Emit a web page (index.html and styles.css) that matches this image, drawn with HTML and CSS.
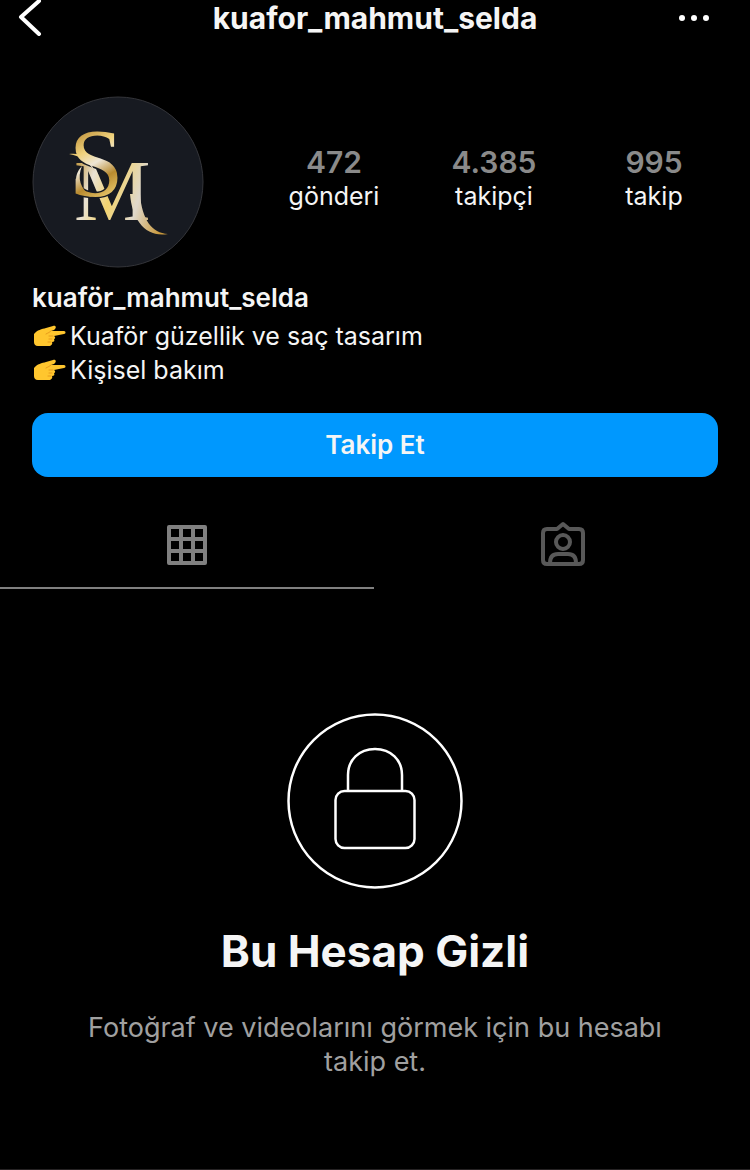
FILE: index.html
```
<!DOCTYPE html>
<html lang="tr">
<head>
    <meta charset="UTF-8">
    <meta name="viewport" content="width=device-width, initial-scale=1.0">
    <title>kuafor_mahmut_selda</title>
    <link rel="stylesheet" href="styles.css">
</head>
<body>
    <header class="topbar">
        <button type="button" class="icon-button back" aria-label="Geri">
            <svg width="28" height="36" viewBox="0 0 28 36" fill="none" stroke="#fff" stroke-width="4" stroke-linecap="round" stroke-linejoin="round">
                <path d="M23 1L5 17L23 34"/>
            </svg>
        </button>
        <h1 class="username">kuafor_mahmut_selda</h1>
        <button type="button" class="icon-button more" aria-label="Seçenekler">
            <svg width="32" height="8" viewBox="0 0 32 8" fill="#fff">
                <circle cx="4" cy="4" r="3"/>
                <circle cx="16" cy="4" r="3"/>
                <circle cx="28" cy="4" r="3"/>
            </svg>
        </button>
    </header>

    <main>
        <section class="profile">
            <div class="summary">
                <svg class="avatar" viewBox="0 0 172 172" role="img" aria-label="Profil fotoğrafı">
                    <defs>
                        <linearGradient id="gold" gradientUnits="userSpaceOnUse" x1="44" y1="34" x2="84" y2="102">
                            <stop offset="0" stop-color="#b98a34"/>
                            <stop offset="0.3" stop-color="#f0d27c"/>
                            <stop offset="0.48" stop-color="#eee6d6"/>
                            <stop offset="0.7" stop-color="#b88a2e"/>
                            <stop offset="1" stop-color="#f3d67a"/>
                        </linearGradient>
                        <linearGradient id="silver" gradientUnits="userSpaceOnUse" x1="40" y1="80" x2="136" y2="110">
                            <stop offset="0" stop-color="#c39a45"/>
                            <stop offset="0.2" stop-color="#e9e2d4"/>
                            <stop offset="0.42" stop-color="#f2d36f"/>
                            <stop offset="0.7" stop-color="#dfd8cb"/>
                            <stop offset="1" stop-color="#c9993c"/>
                        </linearGradient>
                    </defs>
                    <circle cx="86" cy="86" r="85" fill="#171a21" stroke="#34353a"/>
                    <text class="monogram">
                        <tspan x="42" y="124" font-size="86" fill="url(#silver)">M</tspan><tspan class="front" x="37" y="100" font-size="98" fill="url(#gold)">S</tspan>
                    </text>
                    <!-- flourishes: top left, curl of the S, tail of the M -->
                    <path fill="url(#gold)" d="M37 58C48 56 58 62 63 76C57 66 49 60 37 58Z"/>
                    <path fill="url(#gold)" d="M50 70C40 80 42 97 60 101C48 93 45 82 50 70Z"/>
                    <path fill="url(#silver)" d="M98 98C100 124 114 142 136 138C120 137 110 124 108 98Z"/>
                </svg>
                <ul class="stats">
                    <li><strong>472</strong><span>gönderi</span></li>
                    <li><strong>4.385</strong><span>takipçi</span></li>
                    <li><strong>995</strong><span>takip</span></li>
                </ul>
            </div>

            <h2 class="name">kuaför_mahmut_selda</h2>
            <svg class="sprite" aria-hidden="true">
                <symbol id="hand" viewBox="0 0 34 22">
                    <path fill="#ffc62e" d="M2 9C5 5 10 4 14 3L21 1C24 0 25 3 22 5L19 6H32C34 6 34 9 32 9L22 11C24 12 23 14 22 14C23 16 22 17 20 17C21 19 19 21 17 21H6C3 21 2 19 2 17Z"/>
                    <path fill="none" stroke="#e79a1b" stroke-linecap="round" d="M14 9C16 8 18 7 19 6M21 11H17M20 14H17M19 17H16"/>
                </symbol>
            </svg>
            <p class="bio">
                <svg class="hand" role="img" aria-label="👉"><use href="#hand"/></svg>Kuaför güzellik ve saç tasarım<br>
                <svg class="hand" role="img" aria-label="👉"><use href="#hand"/></svg>Kişisel bakım
            </p>
            <button type="button" class="follow">Takip Et</button>
        </section>

        <nav class="tabs">
            <button type="button" class="tab active" aria-label="Gönderiler">
                <svg width="44" height="48" viewBox="0 0 44 48" fill="none" stroke="#808080" stroke-width="4" stroke-linejoin="round">
                    <path d="M4 6H40V42H4ZM16 6V42M28 6V42M4 18H40M4 30H40"/>
                </svg>
            </button>
            <button type="button" class="tab" aria-label="Etiketlenenler">
                <svg width="44" height="48" viewBox="0 0 44 48" fill="none" stroke="#585858" stroke-width="4" stroke-linejoin="round">
                    <path d="M6 8H16L22 3L28 8H38Q42 8 42 12V39Q42 43 38 43H6Q2 43 2 39V12Q2 8 6 8Z"/>
                    <circle cx="22" cy="21" r="7"/>
                    <path d="M9 42C9 36 12 33 17 33H27C32 33 35 36 35 42"/>
                </svg>
            </button>
        </nav>

        <section class="private">
            <svg width="176" height="176" viewBox="0 0 176 176" fill="none" stroke="#fff" stroke-width="2.5" aria-hidden="true">
                <circle cx="88" cy="88" r="86.5"/>
                <rect x="48.5" y="78" width="79" height="57" rx="9"/>
                <path d="M61 78V62C61 47 72 36 88 36S115 47 115 62V78"/>
            </svg>
            <h2>Bu Hesap Gizli</h2>
            <p>Fotoğraf ve videolarını görmek için bu hesabı takip et.</p>
        </section>
    </main>
</body>
</html>
```
FILE: styles.css
```
* {
    box-sizing: border-box;
}

body {
    margin: 0;
    background-color: #000;
    color: #f5f5f5;
    font-family: Inter, "Liberation Sans", sans-serif;
    font-size: 26px;
    line-height: 34px;
}

h1, h2, p, ul {
    margin: 0;
    padding: 0;
}

button {
    border: none;
    padding: 0;
    background: none;
    color: inherit;
    font: inherit;
    cursor: pointer;
}

svg {
    display: block;
}

.topbar {
    display: grid;
    grid-template-columns: 80px 1fr 80px;
    align-items: center;
    height: 36px;
    padding: 0 16px;
}

.icon-button {
    display: flex;
}

.more {
    justify-self: end;
    padding-right: 24px;
}

.username {
    text-align: center;
    font-size: 30px;
    font-weight: 700;
}

.profile {
    padding: 60px 32px 0;
}

.summary {
    display: flex;
    align-items: center;
    gap: 50px;
    margin-right: -16px;
}

.avatar {
    flex: none;
    width: 172px;
    height: 172px;
}

.monogram {
    font-family: "Liberation Serif", serif;
}

.monogram .front {
    stroke: #171a21;
    stroke-width: 3px;
    paint-order: stroke;
}

.stats {
    flex: 1;
    display: grid;
    grid-template-columns: repeat(3, 1fr);
    padding-bottom: 7px;
    list-style: none;
    text-align: center;
}

.stats strong {
    display: block;
    color: #8a8a8a;
    font-size: 30px;
    font-weight: 600;
}

.stats span {
    display: block;
    font-size: 25px;
}

.name {
    margin-top: 13px;
    font-size: 26px;
    font-weight: 600;
}

.sprite {
    position: absolute;
    width: 0;
    height: 0;
}

.bio {
    margin-top: 4px;
    font-size: 25px;
}

.hand {
    display: inline-block;
    width: 34px;
    height: 22px;
    margin-right: 4px;
    vertical-align: -2px;
}

.follow {
    display: block;
    width: 100%;
    height: 64px;
    margin-top: 26px;
    border-radius: 16px;
    background-color: #0098fe;
    font-weight: 600;
}

.tabs {
    display: grid;
    grid-template-columns: 1fr 1fr;
    gap: 2px;
    margin-top: 26px;
}

.tab {
    display: flex;
    justify-content: center;
    padding: 18px 0;
    border-bottom: 2px solid transparent;
}

.tab.active {
    border-color: #808080;
}

.private {
    display: flex;
    flex-direction: column;
    align-items: center;
    padding: 124px 80px 90px;
    border-bottom: 1px solid #262324;
    text-align: center;
}

.private h2 {
    margin-top: 34px;
    font-size: 44px;
    font-weight: 700;
    line-height: 56px;
}

.private p {
    margin-top: 32px;
    color: #a0a0a0;
    font-size: 27px;
}
```
